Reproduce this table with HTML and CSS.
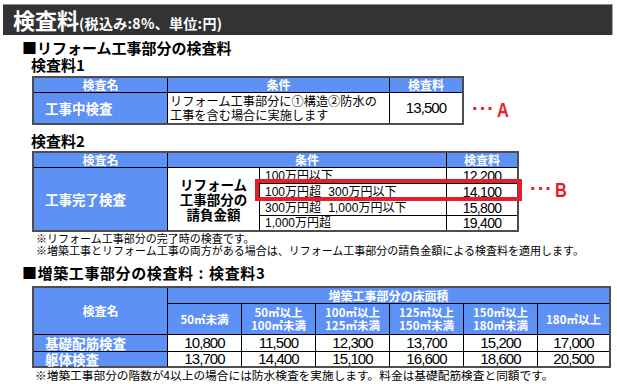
FILE: index.html
```html
<!DOCTYPE html>
<html lang="ja">
<head>
<meta charset="utf-8">
<title>検査料</title>
<link rel="stylesheet" href="styles.css">
</head>
<body>
<div class="page">
  <div class="titlebar"><span class="t-main">検査料</span><span class="t-sub">(税込み:8%、単位:円)</span></div>

  <div class="sec sec1">■リフォーム工事部分の検査料</div>
  <div class="sub">検査料1</div>
  <div class="trow t1row">
    <div class="grid t1">
      <div class="c hd">検査名</div>
      <div class="c hd">条件</div>
      <div class="c hd">検査料</div>
      <div class="c nm">工事中検査</div>
      <div class="c txt">リフォーム工事部分に①構造②防水の<br>工事を含む場合に実施します</div>
      <div class="c num">13,500</div>
    </div>
    <div class="mark mark-a"><span class="dots">···</span><span class="letter">A</span></div>
  </div>

  <div class="sub sub2">検査料2</div>
  <div class="trow t2row">
    <div class="grid t2">
      <div class="c hd">検査名</div>
      <div class="c hd cond-hd">条件</div>
      <div class="c hd">検査料</div>
      <div class="c nm t2nm">工事完了検査</div>
      <div class="c amt">リフォーム<br>工事部分の<br>請負金額</div>
      <div class="c cond">100万円以下</div>
      <div class="c num num2">12,200</div>
      <div class="c cond">100万円超 300万円以下</div>
      <div class="c num num2">14,100</div>
      <div class="c cond">300万円超 1,000万円以下</div>
      <div class="c num num2">15,800</div>
      <div class="c cond">1,000万円超</div>
      <div class="c num num2">19,400</div>
    </div>
    <div class="redbox"></div>
    <div class="mark mark-b"><span class="dots">···</span><span class="letter">B</span></div>
  </div>

  <div class="notes">
    <div>※リフォーム工事部分の完了時の検査です。</div>
    <div>※増築工事とリフォーム工事の両方がある場合は、リフォーム工事部分の請負金額による検査料を適用します。</div>
  </div>

  <div class="sec sec2">■増築工事部分の検査料<span class="colon">:</span>検査料3</div>
  <div class="grid t3">
    <div class="c hd t3name">検査名</div>
    <div class="c hd t3span">増築工事部分の床面積</div>
    <div class="c hd sm">50㎡未満</div>
    <div class="c hd sm">50㎡以上<br>100㎡未満</div>
    <div class="c hd sm">100㎡以上<br>125㎡未満</div>
    <div class="c hd sm">125㎡以上<br>150㎡未満</div>
    <div class="c hd sm">150㎡以上<br>180㎡未満</div>
    <div class="c hd sm">180㎡以上</div>
    <div class="c nm">基礎配筋検査</div>
    <div class="c num">10,800</div>
    <div class="c num">11,500</div>
    <div class="c num">12,300</div>
    <div class="c num">13,700</div>
    <div class="c num">15,200</div>
    <div class="c num">17,000</div>
    <div class="c nm">躯体検査</div>
    <div class="c num">13,700</div>
    <div class="c num">14,400</div>
    <div class="c num">15,100</div>
    <div class="c num">16,600</div>
    <div class="c num">18,600</div>
    <div class="c num">20,500</div>
  </div>
  <div class="note3">※増築工事部分の階数が4以上の場合には防水検査を実施します。料金は基礎配筋検査と同額です。</div>
</div>
</body>
</html>
```

FILE: styles.css
```css
html, body {
  margin: 0;
  padding: 0;
  background: #fff;
}
body {
  font-family: "Liberation Sans", "Noto Sans CJK JP", sans-serif;
  color: #000;
  width: 617px;
  height: 384px;
  overflow: hidden;
}
.page {
  display: flex;
  flex-direction: column;
  align-items: flex-start;
}
.titlebar {
  box-sizing: border-box;
  margin: 4px 0 0 3px;
  width: 610px;
  height: 31px;
  background: #333;
  border-top: 1px solid #8c8c8c;
  border-right: 1px solid #a8a8a8;
  padding-left: 10px;
  line-height: 28px;
  color: #fff;
  font-weight: bold;
  white-space: nowrap;
}
.t-main {
  font-size: 22px;
  font-family: "Noto Sans CJK JP", sans-serif;
}
.t-sub {
  font-size: 14px;
  font-family: "Noto Sans CJK JP", sans-serif;
  letter-spacing: 0.3px;
}
.sec {
  font-family: "Noto Sans CJK JP", sans-serif;
  font-weight: bold;
  font-size: 15px;
  padding-left: 22px;
  white-space: nowrap;
}
.sec1 {
  margin-top: 4px;
  line-height: 17px;
}
.sub {
  font-family: "Noto Sans CJK JP", sans-serif;
  font-weight: bold;
  font-size: 15px;
  line-height: 18px;
  padding-left: 31px;
}
.sub2 {
  margin-top: 7px;
}
.trow {
  position: relative;
  display: flex;
  align-items: flex-start;
  margin-left: 32px;
}
.t1row {
  margin-top: 2px;
}
.t2row {
  margin-top: 1px;
}
.grid {
  display: grid;
  gap: 1px;
  background: #000;
  border: 2px solid #4d4d4d;
}
.t1 {
  grid-template-columns: 133px 221px 72px;
  grid-template-rows: 14px 30px;
}
.t2 {
  grid-template-columns: 133px 91px 186px 70px;
  grid-template-rows: 14px 15px 15px 15px 14px;
}
.t3 {
  margin: 4px 0 0 32px;
  grid-template-columns: 133px 73px 73px 73px 73px 73px 71px;
  grid-template-rows: 15px 30px 16px 14px;
}
.c {
  background: #fff;
  display: flex;
  align-items: center;
  white-space: nowrap;
}
.hd {
  background: #5e91f6;
  color: #fff;
  font-family: "Noto Sans CJK JP", sans-serif;
  font-weight: bold;
  font-size: 12px;
  line-height: 14px;
  justify-content: center;
  text-align: center;
}
.hd.sm {
  font-size: 11.5px;
  line-height: 13px;
}
.nm {
  background: #5e91f6;
  color: #fff;
  font-family: "Noto Sans CJK JP", sans-serif;
  font-weight: bold;
  font-size: 13.5px;
  line-height: 14px;
  padding-left: 11px;
}
.txt {
  font-family: "Noto Sans CJK JP", sans-serif;
  font-size: 12.2px;
  line-height: 14px;
  padding-left: 2px;
}
.num {
  justify-content: center;
  font-family: "Liberation Sans", sans-serif;
  font-size: 15px;
  line-height: 14px;
  letter-spacing: -0.9px;
}
.num2 {
  font-size: 14px;
  letter-spacing: -0.7px;
}
.cond-hd {
  grid-column: 2 / 4;
}
.t2nm {
  grid-row: 2 / 6;
}
.amt {
  grid-column: 2;
  grid-row: 2 / 6;
  justify-content: center;
  text-align: center;
  font-family: "Noto Sans CJK JP", sans-serif;
  font-weight: bold;
  font-size: 13.5px;
  line-height: 15px;
}
.cond {
  grid-column: 3;
  font-family: "Liberation Sans", "Noto Sans CJK JP", sans-serif;
  font-size: 12px;
  line-height: 14px;
  padding-left: 5px;
  word-spacing: 4px;
}
.t3name {
  grid-row: 1 / 3;
  font-size: 12px;
}
.t3span {
  grid-column: 2 / 8;
}
.mark {
  display: flex;
  align-items: baseline;
  color: #e61e2b;
  font-family: "Liberation Sans", sans-serif;
  font-weight: bold;
  font-size: 21px;
  line-height: 20px;
}
.mark .dots {
  font-size: 20px;
  letter-spacing: 1px;
  position: relative;
  top: -2px;
}
.mark .letter {
  display: inline-block;
  transform: scaleX(0.78);
  transform-origin: left center;
  margin-left: 2px;
}
.mark-a {
  margin: 24px 0 0 8px;
}
.mark-b {
  margin: 29px 0 0 11px;
}
.redbox {
  position: absolute;
  box-sizing: border-box;
  left: 223px;
  top: 28px;
  width: 267px;
  height: 22px;
  border: 4px solid #e61e2b;
}
.notes {
  margin-left: 36px;
  font-family: "Noto Sans CJK JP", sans-serif;
  font-size: 11px;
  line-height: 12px;
  white-space: nowrap;
}
.sec2 {
  margin-top: 8px;
  line-height: 18px;
  letter-spacing: 0.6px;
}
.sec2 .colon {
  margin: 0 5px;
}
.note3 {
  margin-left: 35px;
  font-family: "Noto Sans CJK JP", sans-serif;
  font-size: 11.7px;
  line-height: 14px;
  white-space: nowrap;
}
```
